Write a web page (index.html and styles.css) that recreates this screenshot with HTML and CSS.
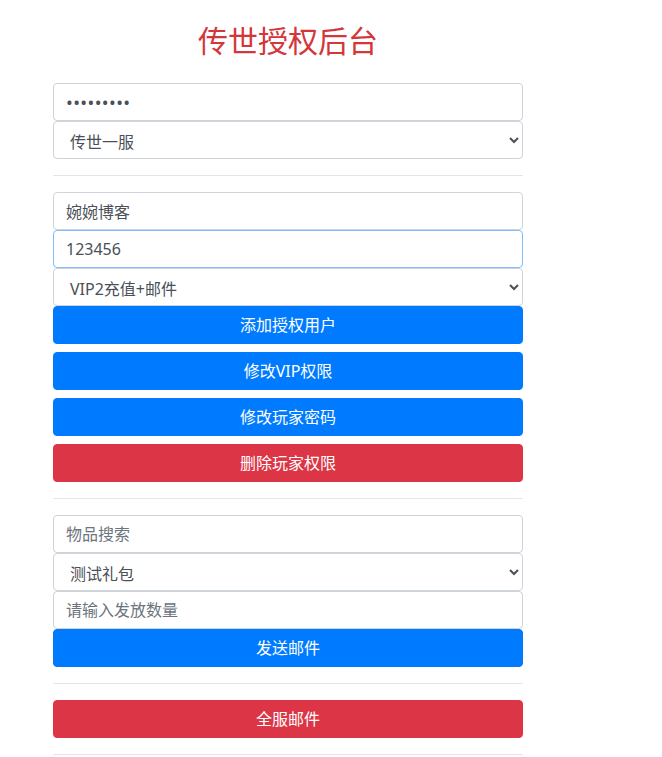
FILE: index.html
```html
<!DOCTYPE html>
<html lang="zh-CN">
<head>
<meta charset="utf-8">
<title>传世授权后台</title>
<link rel="stylesheet" href="styles.css">
</head>
<body>
<div class="panel">
  <h2 class="title">传世授权后台</h2>

  <input class="field password" type="password" value="123456789">
  <select class="field select">
    <option>传世一服</option>
  </select>

  <hr class="divider">

  <input class="field" type="text" value="婉婉博客">
  <input class="field focused" type="text" value="123456" autofocus>
  <select class="field select">
    <option>VIP2充值+邮件</option>
  </select>
  <button class="btn btn-primary">添加授权用户</button>
  <button class="btn btn-primary spaced">修改VIP权限</button>
  <button class="btn btn-primary spaced">修改玩家密码</button>
  <button class="btn btn-danger spaced">删除玩家权限</button>

  <hr class="divider">

  <input class="field" type="text" placeholder="物品搜索">
  <select class="field select">
    <option>测试礼包</option>
  </select>
  <input class="field" type="text" placeholder="请输入发放数量">
  <button class="btn btn-primary">发送邮件</button>

  <hr class="divider">

  <button class="btn btn-danger">全服邮件</button>

  <hr class="divider">
</div>
</body>
</html>
```

FILE: styles.css
```css
* {
  box-sizing: border-box;
}

html, body {
  margin: 0;
  padding: 0;
  background: #fff;
}

body {
  font-family: "Noto Sans", "Noto Sans CJK SC", sans-serif;
  font-size: 16px;
  line-height: 1.5;
  color: #212529;
}

.panel {
  width: 470px;
  margin-left: 53px;
  padding-top: 23px;
  display: flex;
  flex-direction: column;
}

.title {
  margin: 0 0 24px;
  font-size: 30px;
  line-height: 36px;
  font-weight: 400;
  text-align: center;
  color: #d4363a;
}

.field {
  display: block;
  width: 100%;
  height: 38px;
  margin: 0;
  padding: 6px 12px;
  font-family: inherit;
  font-size: 16px;
  line-height: 1.5;
  color: #495057;
  background: #fff;
  border: 1px solid #ced4da;
  border-radius: 4px;
  outline: none;
}

.field::placeholder {
  color: #6c757d;
  opacity: 1;
}

.field.focused {
  border-color: #80bdff;
}

.password {
  font-size: 18px;
  letter-spacing: 0.4px;
  padding-top: 5px;
  padding-bottom: 5px;
}

.select {
  padding: 8px 12px 4px;
}

.divider {
  width: 100%;
  margin: 16px 0;
  border: 0;
  border-top: 1px solid rgba(0, 0, 0, 0.1);
}

.btn {
  display: block;
  width: 100%;
  height: 38px;
  margin: 0;
  padding: 6px 12px;
  font-family: inherit;
  font-size: 16px;
  line-height: 1.5;
  color: #fff;
  text-align: center;
  border: 1px solid transparent;
  border-radius: 4px;
}

.btn.spaced {
  margin-top: 8px;
}

.btn-primary {
  background: #007bff;
  border-color: #007bff;
}

.btn-danger {
  background: #dc3545;
  border-color: #dc3545;
}
```
